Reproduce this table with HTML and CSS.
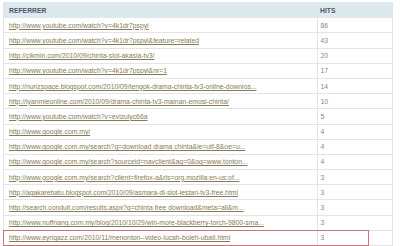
FILE: index.html
```html
<!DOCTYPE html>
<html lang="en">
<head>
  <meta charset="UTF-8">
  <title>Referrers</title>
  <link rel="stylesheet" href="styles.css">
</head>
<body>
  <div class="stats">
    <table class="referrers">
      <thead>
        <tr>
          <th class="ref">Referrer</th>
          <th class="hits">Hits</th>
        </tr>
      </thead>
      <tbody>
        <tr><td class="ref"><a href="#">http://www.youtube.com/watch?v=4k1dr7pspyi</a></td><td class="hits">86</td></tr>
        <tr><td class="ref"><a href="#">http://www.youtube.com/watch?v=4k1dr7pspyi&amp;feature=related</a></td><td class="hits">43</td></tr>
        <tr><td class="ref"><a href="#">http://cikmin.com/2010/09/chinta-slot-akasia-tv3/</a></td><td class="hits">20</td></tr>
        <tr><td class="ref"><a href="#">http://www.youtube.com/watch?v=4k1dr7pspyi&amp;nr=1</a></td><td class="hits">17</td></tr>
        <tr><td class="ref"><a href="#">http://nurizspace.blogspot.com/2010/09/tengok-drama-chinta-tv3-online-downlos...</a></td><td class="hits">14</td></tr>
        <tr><td class="ref"><a href="#">http://iyanmieonline.com/2010/09/drama-chinta-tv3-mainan-emosi-chinta/</a></td><td class="hits">10</td></tr>
        <tr><td class="ref"><a href="#">http://www.youtube.com/watch?v=evizuiyc66a</a></td><td class="hits">5</td></tr>
        <tr><td class="ref"><a href="#">http://www.google.com.my/</a></td><td class="hits">4</td></tr>
        <tr><td class="ref"><a href="#">http://www.google.com.my/search?q=download drama chinta&amp;ie=utf-8&amp;oe=u...</a></td><td class="hits">4</td></tr>
        <tr><td class="ref"><a href="#">http://www.google.com.my/search?sourceid=navclient&amp;aq=0&amp;oq=www.tonton...</a></td><td class="hits">4</td></tr>
        <tr><td class="ref"><a href="#">http://www.google.com.my/search?client=firefox-a&amp;rls=org.mozilla:en-us:of...</a></td><td class="hits">3</td></tr>
        <tr><td class="ref"><a href="#">http://agakarebatu.blogspot.com/2010/09/asmara-di-slot-lestari-tv3-free.html</a></td><td class="hits">3</td></tr>
        <tr><td class="ref"><a href="#">http://search.conduit.com/results.aspx?q=chinta free download&amp;meta=all&amp;m...</a></td><td class="hits">3</td></tr>
        <tr><td class="ref"><a href="#">http://www.nuffnang.com.my/blog/2010/10/29/win-more-blackberry-torch-9800-sma...</a></td><td class="hits">3</td></tr>
        <tr class="marked"><td class="ref"><a href="#">http://www.eyriqazz.com/2010/11/menonton--video-lucah-boleh-ubati.html</a><span class="highlight"></span></td><td class="hits">3</td></tr>
      </tbody>
    </table>
  </div>
</body>
</html>
```

FILE: styles.css
```css
body {
  margin: 0;
  background: #fff;
  font-family: "Liberation Sans", Arial, sans-serif;
  color: #777;
}

.stats {
  padding: 2px 7px 0 3px;
}

/* tabla de referidos */
.referrers {
  width: 390px;
  border-collapse: collapse;
  table-layout: fixed;
  font-size: 6.8px;
}
.referrers tr {
  height: 15.2px;
}
.referrers th,
.referrers td {
  padding: 0 0 0 5px;
  border: 1px solid #e4e4e4;
  text-align: left;
  white-space: nowrap;
  overflow: hidden;
}
.referrers th {
  background: #dce9ee;
  color: #556;
  font-weight: bold;
  text-transform: uppercase;
  border-color: #e0e8ea;
}
.referrers th.ref {
  border-right: none;
}
.referrers th.hits {
  border-left: none;
}
.referrers .hits {
  width: 72px;
  padding-left: 3px;
}
.referrers td.hits {
  color: #888;
}
.referrers a {
  color: #857b58;
  text-decoration: underline;
}

/* recuadro rojo */
.marked td.ref {
  position: relative;
  overflow: visible;
}
.highlight {
  position: absolute;
  left: -1px;
  top: -1px;
  width: 364px;
  height: 14px;
  border: 1px solid #d0707a;
  pointer-events: none;
}
```
